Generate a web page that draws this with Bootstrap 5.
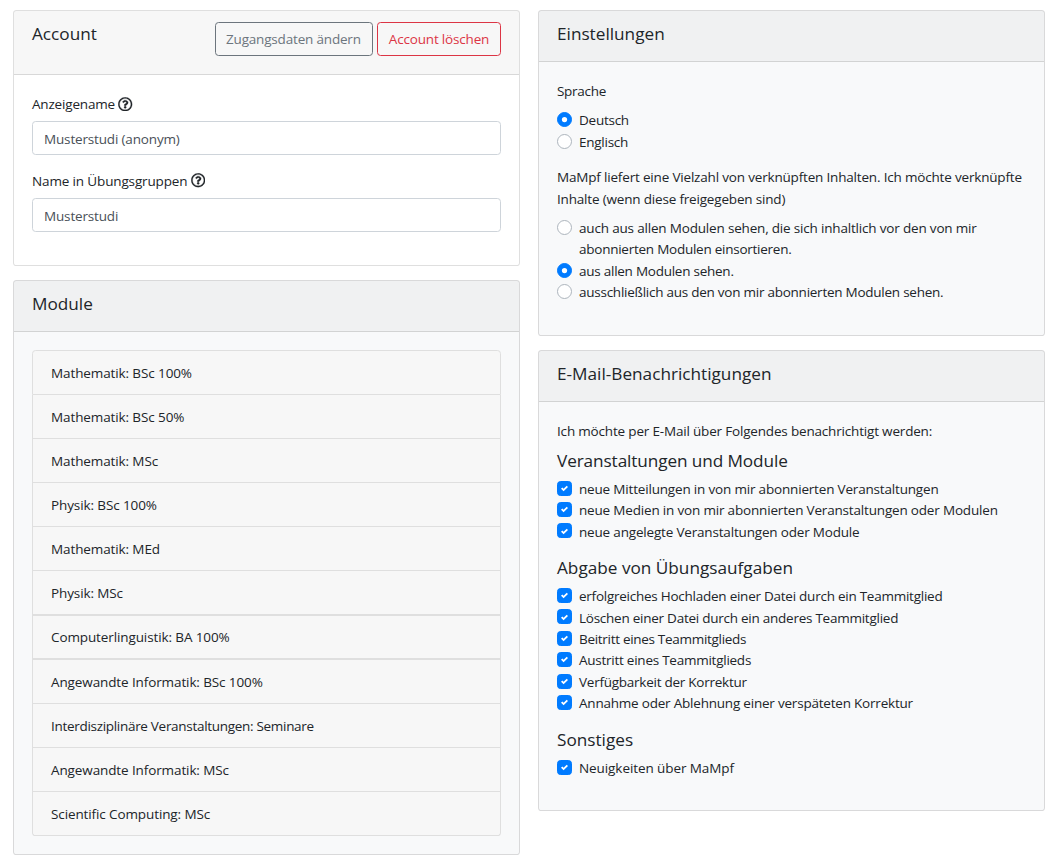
<!DOCTYPE html>
<html lang="de">
<head>
<meta charset="utf-8">
<meta name="viewport" content="width=device-width, initial-scale=1">
<title>Account</title>
<link href="https://cdn.jsdelivr.net/npm/bootstrap@5.3.0/dist/css/bootstrap.min.css" rel="stylesheet">
<style>
html{font-size:14.4px}
body{font-family:"Open Sans","Noto Sans",sans-serif;font-size:13.5px;line-height:21.6px;color:#212529;background:#fff;letter-spacing:-.18px}
.page{padding:10px 12px 0 13px}
.page>.row{--bs-gutter-x:18px}
.card{--bs-card-spacer-x:18px;--bs-card-spacer-y:18px;--bs-card-cap-padding-x:18px;--bs-card-cap-padding-y:10.8px;--bs-card-border-color:rgba(0,0,0,.125);--bs-card-border-radius:3.6px;--bs-card-inner-border-radius:2.6px;--bs-card-cap-bg:rgba(0,0,0,.03);margin-bottom:14.4px;color:#212529}
h5{font-size:17.2px;line-height:21.6px;font-weight:400;padding-top:1px;margin-bottom:6.2px;letter-spacing:0}
.card-header h5{padding-top:1.4px;margin-bottom:5.8px}
.btn-row{margin-bottom:7.2px}
.btn{--bs-btn-font-size:13.5px;--bs-btn-line-height:21.6px;--bs-btn-border-radius:3.6px;padding:6.4px 9px 4.4px;letter-spacing:-.18px}
.btn-outline-secondary{--bs-btn-color:#6c757d;--bs-btn-border-color:#6c757d;width:158px;padding-right:11px}
.btn-outline-danger{--bs-btn-color:#dc3545;--bs-btn-border-color:#dc3545;width:124px}
.account-body{padding-bottom:18.6px}
.settings{margin-bottom:13.9px}
.form-label{display:block;padding-top:1px;margin-bottom:5.4px}
.form-control{font-size:13.5px;line-height:21.6px;padding:6.4px 11px 4px;border-color:#ced4da;border-radius:3.6px;color:#495057;height:34px;margin-bottom:.4px;letter-spacing:-.16px}
.help{width:14.4px;height:14.4px;vertical-align:-2px;stroke:currentColor;stroke-width:8px}
.block{margin-bottom:14.4px}
.lead-in{padding-top:1px;margin-bottom:6.2px}
.form-check{min-height:21.4px;line-height:21.4px;padding-left:22px;margin:0}
.form-check .form-check-input{width:15px;height:15px;margin:3px 0 0 -22px;border-color:#adb5bd;background-size:50% 50%}
.form-check .form-check-input:checked{background-color:#007bff;border-color:#007bff}
.form-check-input:checked[type=checkbox]{background-image:url("data:image/svg+xml,%3csvg xmlns='http://www.w3.org/2000/svg' viewBox='0 0 8 8'%3e%3cpath fill='%23fff' d='M6.564.75l-3.59 3.612-1.538-1.55L0 4.26l2.974 2.99L8 2.193z'/%3e%3c/svg%3e")}
.form-check-input:checked[type=radio]{background-image:url("data:image/svg+xml,%3csvg xmlns='http://www.w3.org/2000/svg' viewBox='-4 -4 8 8'%3e%3ccircle r='3' fill='%23fff'/%3e%3c/svg%3e")}
.form-check-input[type=checkbox]{border-radius:3.6px}
.form-check-label{display:block;padding-top:1.2px;margin-bottom:-1.2px}
.list-group{--bs-list-group-bg:#f7f7f7;--bs-list-group-color:#212529;--bs-list-group-border-color:#dfdfdf;--bs-list-group-border-radius:3.6px;margin:-.4px 0 .4px;letter-spacing:-.11px}
.list-group-item{padding:12px 18px 9.4px}
.list-group-item.lined{padding-bottom:10.4px;box-shadow:inset 0 1px #dfdfdf,inset 0 -1px #dfdfdf}
.snug{letter-spacing:-.25px}
.snugger{letter-spacing:-.3px}
.loose{letter-spacing:-.08px}
</style>
</head>
<body>
<main class="container-fluid page">
<div class="row">
  <div class="col-6">
    <section class="card">
      <div class="card-header d-flex justify-content-between align-items-start">
        <h5>Account</h5>
        <div class="btn-row d-flex gap-1">
          <button type="button" class="btn btn-outline-secondary text-nowrap">Zugangsdaten ändern</button>
          <button type="button" class="btn btn-outline-danger text-nowrap">Account löschen</button>
        </div>
      </div>
      <div class="card-body account-body">
        <div class="block">
          <label class="form-label" for="n1">Anzeigename <svg class="help" viewBox="0 0 512 512" fill="currentColor"><path id="q" d="M256 8C119.043 8 8 119.083 8 256c0 136.997 111.043 248 248 248s248-111.003 248-248C504 119.083 392.957 8 256 8zm0 448c-110.532 0-200-89.431-200-200 0-110.495 89.472-200 200-200 110.491 0 200 89.471 200 200 0 110.53-89.431 200-200 200zm107.244-255.2c0 67.052-72.421 68.084-72.421 92.863V300c0 6.627-5.373 12-12 12h-45.647c-6.627 0-12-5.373-12-12v-8.659c0-35.745 27.1-50.034 47.579-61.516 17.561-9.845 28.324-16.541 28.324-29.579 0-17.246-21.999-28.693-39.784-28.693-23.189 0-33.894 10.977-48.942 29.969-4.057 5.12-11.46 6.071-16.666 2.124l-27.824-21.098c-5.107-3.872-6.251-11.066-2.644-16.363C184.846 131.491 214.94 112 261.794 112c49.071 0 101.45 38.304 101.45 88.8zM298 368c0 23.159-18.841 42-42 42s-42-18.841-42-42 18.841-42 42-42 42 18.841 42 42z"/></svg></label>
          <input class="form-control" id="n1" value="Musterstudi (anonym)">
        </div>
        <div class="block">
          <label class="form-label" for="n2" style="letter-spacing:-.14px">Name in Übungsgruppen <svg class="help" viewBox="0 0 512 512" fill="currentColor"><use href="#q"/></svg></label>
          <input class="form-control" id="n2" value="Musterstudi">
        </div>
      </div>
    </section>
    <section class="card bg-light">
      <div class="card-header"><h5>Module</h5></div>
      <div class="card-body">
        <ul class="list-group">
          <li class="list-group-item">Mathematik: BSc 100%</li>
          <li class="list-group-item">Mathematik: BSc 50%</li>
          <li class="list-group-item">Mathematik: MSc</li>
          <li class="list-group-item">Physik: BSc 100%</li>
          <li class="list-group-item">Mathematik: MEd</li>
          <li class="list-group-item">Physik: MSc</li>
          <li class="list-group-item lined">Computerlinguistik: BA 100%</li>
          <li class="list-group-item">Angewandte Informatik: BSc 100%</li>
          <li class="list-group-item snugger">Interdisziplinäre Veranstaltungen: Seminare</li>
          <li class="list-group-item">Angewandte Informatik: MSc</li>
          <li class="list-group-item">Scientific Computing: MSc</li>
        </ul>
      </div>
    </section>
  </div>
  <div class="col-6">
    <section class="card bg-light settings">
      <div class="card-header"><h5>Einstellungen</h5></div>
      <div class="card-body">
        <div class="lead-in snugger">Sprache</div>
        <div class="block snug">
          <div class="form-check"><input class="form-check-input" type="radio" name="l" id="l1" checked><label class="form-check-label" for="l1">Deutsch</label></div>
          <div class="form-check"><input class="form-check-input" type="radio" name="l" id="l2"><label class="form-check-label" for="l2">Englisch</label></div>
        </div>
        <div class="lead-in text-nowrap">MaMpf liefert eine Vielzahl von verknüpften Inhalten. Ich möchte verknüpfte<br>Inhalte (wenn diese freigegeben sind)</div>
        <div class="block snug">
          <div class="form-check"><input class="form-check-input" type="radio" name="m" id="m1"><label class="form-check-label" for="m1"><span style="letter-spacing:-.18px">auch aus allen Modulen sehen, die sich inhaltlich vor den von mir</span><br>abonnierten Modulen einsortieren.</label></div>
          <div class="form-check"><input class="form-check-input" type="radio" name="m" id="m2" checked><label class="form-check-label" for="m2">aus allen Modulen sehen.</label></div>
          <div class="form-check"><input class="form-check-input" type="radio" name="m" id="m3"><label class="form-check-label" for="m3">ausschließlich aus den von mir abonnierten Modulen sehen.</label></div>
        </div>
      </div>
    </section>
    <section class="card bg-light">
      <div class="card-header"><h5>E-Mail-Benachrichtigungen</h5></div>
      <div class="card-body">
        <div class="lead-in">Ich möchte per E-Mail über Folgendes benachrichtigt werden:</div>
        <h5 style="letter-spacing:-.1px">Veranstaltungen und Module</h5>
        <div class="block">
          <div class="form-check"><input class="form-check-input" type="checkbox" id="c1" checked><label class="form-check-label" for="c1">neue Mitteilungen in von mir abonnierten Veranstaltungen</label></div>
          <div class="form-check"><input class="form-check-input" type="checkbox" id="c2" checked><label class="form-check-label" for="c2">neue Medien in von mir abonnierten Veranstaltungen oder Modulen</label></div>
          <div class="form-check"><input class="form-check-input" type="checkbox" id="c3" checked><label class="form-check-label" for="c3">neue angelegte Veranstaltungen oder Module</label></div>
        </div>
        <h5>Abgabe von Übungsaufgaben</h5>
        <div class="block snug">
          <div class="form-check"><input class="form-check-input" type="checkbox" id="c4" checked><label class="form-check-label" for="c4">erfolgreiches Hochladen einer Datei durch ein Teammitglied</label></div>
          <div class="form-check"><input class="form-check-input" type="checkbox" id="c5" checked><label class="form-check-label" for="c5">Löschen einer Datei durch ein anderes Teammitglied</label></div>
          <div class="form-check"><input class="form-check-input" type="checkbox" id="c6" checked><label class="form-check-label snugger" for="c6">Beitritt eines Teammitglieds</label></div>
          <div class="form-check"><input class="form-check-input" type="checkbox" id="c7" checked><label class="form-check-label" for="c7">Austritt eines Teammitglieds</label></div>
          <div class="form-check"><input class="form-check-input" type="checkbox" id="c8" checked><label class="form-check-label" for="c8">Verfügbarkeit der Korrektur</label></div>
          <div class="form-check"><input class="form-check-input" type="checkbox" id="c9" checked><label class="form-check-label" for="c9" style="letter-spacing:-.21px">Annahme oder Ablehnung einer verspäteten Korrektur</label></div>
        </div>
        <h5>Sonstiges</h5>
        <div class="block loose">
          <div class="form-check"><input class="form-check-input" type="checkbox" id="c10" checked><label class="form-check-label" for="c10">Neuigkeiten über MaMpf</label></div>
        </div>
      </div>
    </section>
  </div>
</div>
</main>
<script src="https://cdn.jsdelivr.net/npm/bootstrap@5.3.0/dist/js/bootstrap.bundle.min.js"></script>
</body>
</html>
